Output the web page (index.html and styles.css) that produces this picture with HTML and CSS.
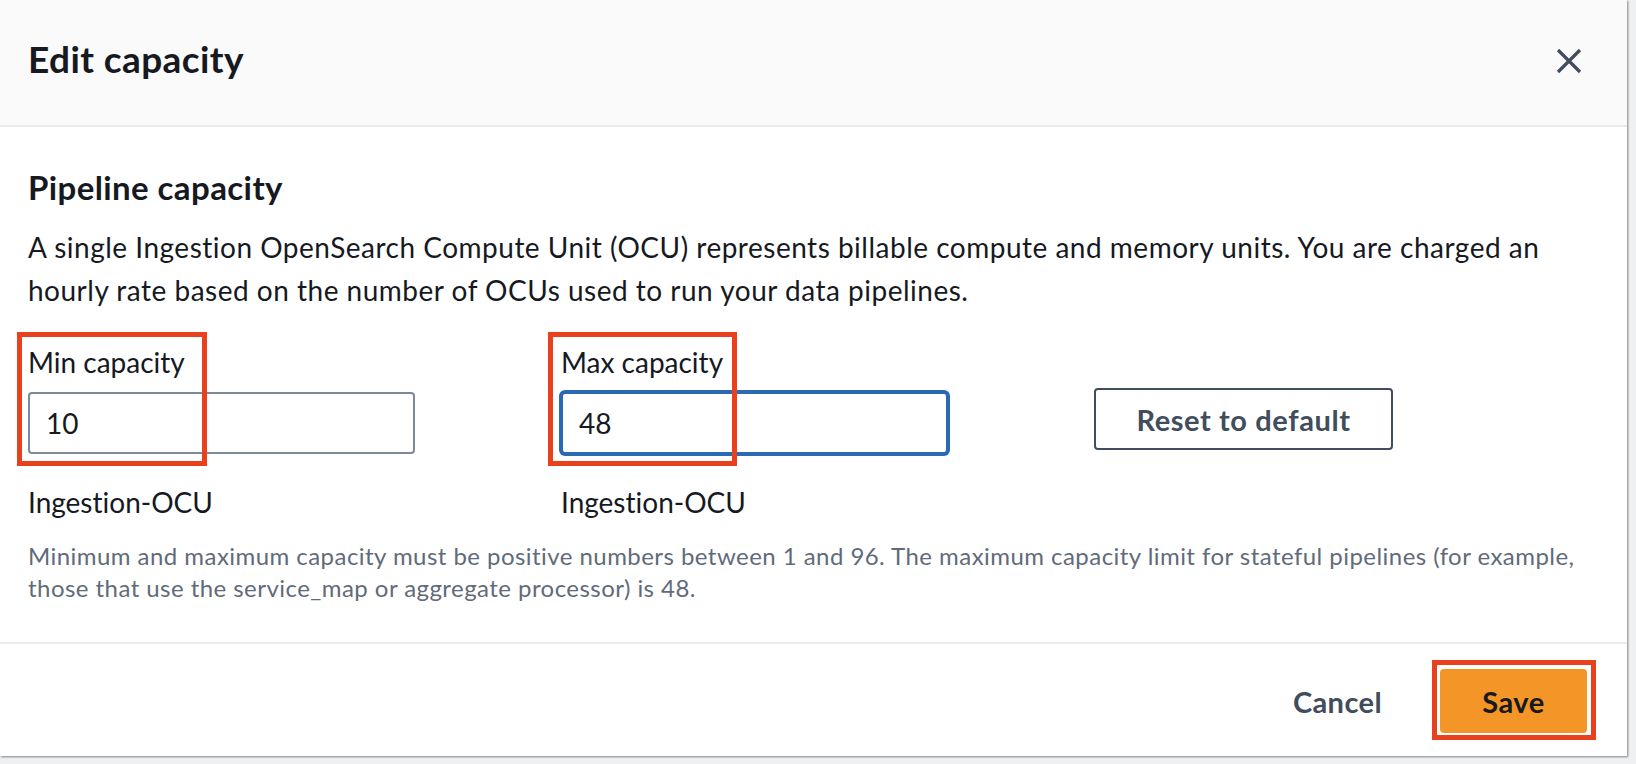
FILE: index.html
```html
<!DOCTYPE html>
<html lang="en">
<head>
<meta charset="utf-8">
<title>Edit capacity</title>
<link rel="stylesheet" href="styles.css">
</head>
<body>
<div class="page">
  <div class="modal">
    <header class="modal-header">
      <h1 class="modal-title">Edit capacity</h1>
      <button class="close-btn" type="button" aria-label="Close">
        <svg width="26" height="26" viewBox="0 0 26 26" aria-hidden="true">
          <path d="M2 2 L24 24 M24 2 L2 24" stroke="#414d5c" stroke-width="3.2" fill="none"/>
        </svg>
      </button>
    </header>

    <div class="modal-body">
      <h2 class="section-title">Pipeline capacity</h2>
      <p class="section-desc">A single Ingestion OpenSearch Compute Unit (OCU) represents billable compute and memory units. You are charged an hourly rate based on the number of OCUs used to run your data pipelines.</p>

      <div class="fields">
        <div class="field">
          <span class="highlight hl-min"></span>
          <label class="field-label" for="min-cap">Min capacity</label>
          <input class="field-input" id="min-cap" type="text" value="10" readonly>
          <div class="field-unit">Ingestion-OCU</div>
        </div>
        <div class="field">
          <span class="highlight hl-max"></span>
          <label class="field-label" for="max-cap">Max capacity</label>
          <input class="field-input is-focused" id="max-cap" type="text" value="48" readonly>
          <div class="field-unit">Ingestion-OCU</div>
        </div>
        <div class="field field-action">
          <button class="btn-normal" type="button">Reset to default</button>
        </div>
      </div>

      <p class="constraint">Minimum and maximum capacity must be positive numbers between 1 and 96. The maximum capacity limit for stateful pipelines (for example, those that use the service_map or aggregate processor) is 48.</p>
    </div>

    <footer class="modal-footer">
      <button class="btn-link" type="button">Cancel</button>
      <div class="save-wrap">
        <span class="highlight hl-save"></span>
        <button class="btn-primary" type="button">Save</button>
      </div>
    </footer>
  </div>
</div>
</body>
</html>
```

FILE: styles.css
```css
* { box-sizing: border-box; }

html, body {
  margin: 0;
  padding: 0;
}

body {
  background: #eff0f1;
  font-family: Lato, "Open Sans", sans-serif;
  font-variant-ligatures: none;
  color: #16191f;
}

.page {
  width: 1636px;
  height: 764px;
  overflow: hidden;
}

.modal {
  width: 1627px;
  background: #ffffff;
  box-shadow: 1px 1px 2px rgba(0, 0, 0, 0.45);
}

/* Header */
.modal-header {
  height: 127px;
  padding: 37px 28px 0 28px;
  background: #fafafa;
  border-bottom: 2px solid #e9ebed;
  display: flex;
  justify-content: space-between;
  align-items: flex-start;
}

.modal-title {
  margin: 0;
  font-size: 37px;
  line-height: 44px;
  font-weight: 700;
  letter-spacing: 0.4px;
  color: #16191f;
}

.close-btn {
  margin: 11px 17px 0 0;
  padding: 0;
  border: 0;
  background: transparent;
  width: 26px;
  height: 26px;
  display: flex;
}

/* Body */
.modal-body {
  padding: 40px 28px 38px 28px;
}

.section-title {
  margin: 0;
  font-size: 33px;
  line-height: 40px;
  font-weight: 700;
  letter-spacing: 0.4px;
}

.section-desc {
  margin: 19px 0 0 0;
  font-size: 28px;
  line-height: 43px;
  letter-spacing: 0.5px;
}

.fields {
  margin-top: 30px;
  display: grid;
  grid-template-columns: 502px 502px 1fr;
  column-gap: 31px;
}

.field {
  position: relative;
  display: flex;
  flex-direction: column;
  align-items: flex-start;
}

.field-label {
  font-size: 28px;
  line-height: 40px;
  color: #16191f;
}

.field-input {
  margin-top: 10px;
  width: 387px;
  height: 62px;
  padding: 0 16px;
  border: 2px solid #7d8998;
  border-radius: 4px;
  background: #ffffff;
  font-family: Lato, "Open Sans", sans-serif;
  font-size: 28px;
  color: #16191f;
  outline: none;
}

.field-input.is-focused {
  border-color: #2a69b4;
  box-shadow: 0 0 0 2px #2a69b4;
}

.field-unit {
  margin-top: 28px;
  font-size: 28px;
  line-height: 40px;
  color: #16191f;
}

.field-action {
  padding-top: 46px;
}

.btn-normal {
  width: 299px;
  height: 62px;
  padding: 0;
  border: 2px solid #414d5c;
  border-radius: 4px;
  background: #ffffff;
  font-family: Lato, "Open Sans", sans-serif;
  font-size: 29px;
  font-weight: 700;
  letter-spacing: 0.6px;
  color: #414d5c;
}

.constraint {
  margin: 18px 0 0 0;
  font-size: 24px;
  line-height: 32px;
  letter-spacing: 0.45px;
  color: #5f6b7a;
}

/* Footer */
.modal-footer {
  border-top: 2px solid #e9ebed;
  padding: 25px 40px 23px 28px;
  display: flex;
  justify-content: flex-end;
  align-items: center;
  gap: 58px;
}

.btn-link {
  padding: 0;
  border: 0;
  background: transparent;
  font-family: Lato, "Open Sans", sans-serif;
  font-size: 29px;
  font-weight: 700;
  letter-spacing: 0.4px;
  color: #414d5c;
}

.save-wrap {
  position: relative;
  display: flex;
}

.btn-primary {
  width: 147px;
  height: 64px;
  padding: 0;
  border: 0;
  border-radius: 4px;
  background: #f49627;
  font-family: Lato, "Open Sans", sans-serif;
  font-size: 29px;
  font-weight: 700;
  letter-spacing: 0.5px;
  color: #16191f;
}

/* Annotation highlight boxes */
.highlight {
  position: absolute;
  border: 5px solid #e9401d;
  pointer-events: none;
  z-index: 2;
}

.hl-min {
  left: -11px;
  top: -10px;
  width: 190px;
  height: 134px;
}

.hl-max {
  left: -13px;
  top: -10px;
  width: 189px;
  height: 134px;
}

.hl-save {
  left: -8px;
  top: -9px;
  width: 164px;
  height: 80px;
}
```
